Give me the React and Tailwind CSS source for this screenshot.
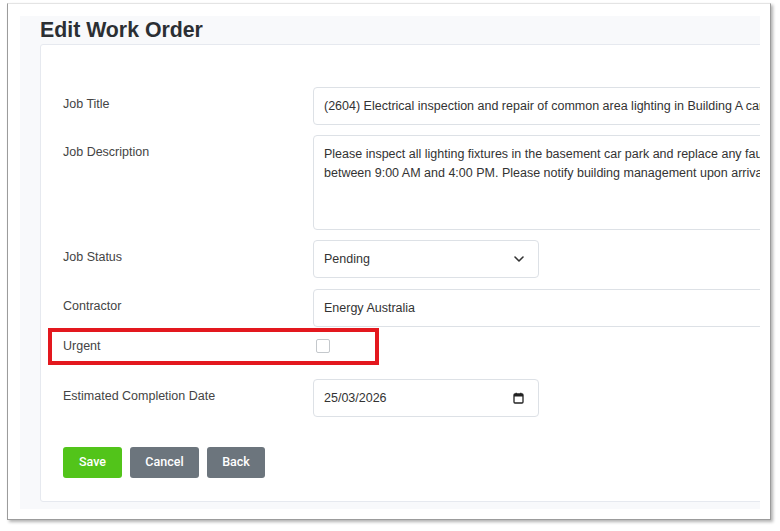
import React from 'react';

const labelCls = 'w-[250px] shrink-0 pt-[9px] text-[12.5px] leading-4 text-[#444]';
const inputCls = 'h-[38px] border border-[#dde1e6] rounded-[4px] bg-white px-[10px] flex items-center text-[12.5px] text-[#333] whitespace-nowrap';

function FormRow({ label, children, className = '' }) {
    return (
        <div className={`flex ${className}`}>
            <div className={labelCls}>{label}</div>
            {children}
        </div>
    );
}

function ChevronDown() {
    return (
        <svg width="10" height="6" viewBox="0 0 10 6" className="text-[#333]">
            <path d="M1 1l4 4 4-4" fill="none" stroke="currentColor" strokeWidth="1.6" strokeLinecap="round" strokeLinejoin="round" />
        </svg>
    );
}

function CalendarIcon() {
    return (
        <svg width="11" height="12" viewBox="0 0 11 12" className="text-[#222]">
            <rect x="1" y="2" width="9" height="9" rx="1" fill="none" stroke="currentColor" strokeWidth="1.3" />
            <rect x="1" y="2" width="9" height="2.5" fill="currentColor" />
            <path d="M3.2 0.8v2M7.8 0.8v2" stroke="currentColor" strokeWidth="1.2" />
        </svg>
    );
}

export default function App() {
    return (
        <div className="relative w-[780px] h-[531px] bg-white overflow-hidden" style={{ fontFamily: '"Liberation Sans", Arial, sans-serif' }}>
            {/* Screenshot frame */}
            <div className="ml-[7px] mt-[3px] w-[764px] h-[517px] border border-[#9c9c9c] border-t-[#e4e4e4] shadow-[2px_2px_3px_rgba(0,0,0,0.3)] bg-white pl-[12px] pt-[12px]">
                <div className="w-[740px] h-[493px] bg-[#f8f9fb] overflow-hidden pl-[20px] pt-[2px]">
                    <h1 className="h-[24px] leading-[24px] text-[21.3px] font-bold text-[#2b2f33]">Edit Work Order</h1>

                    {/* Card */}
                    <div className="mt-[2px] w-[900px] h-[458px] bg-white border border-[#e6e9ef] rounded-[3px] pl-[22px] pt-[42px]">
                        <FormRow label="Job Title" className="mb-[10px]">
                            <div className={`${inputCls} w-[600px]`}>
                                (2604) Electrical inspection and repair of common area lighting in Building A car park
                            </div>
                        </FormRow>

                        <FormRow label="Job Description" className="mb-[10px]">
                            <div className="w-[600px] h-[95px] border border-[#dde1e6] rounded-[4px] bg-white px-[10px] pt-[9px] text-[12.5px] leading-[19px] text-[#333] whitespace-nowrap">
                                <div>Please inspect all lighting fixtures in the basement car park and replace any faulty lights. Access is available</div>
                                <div>between 9:00 AM and 4:00 PM. Please notify building management upon arrival.</div>
                            </div>
                        </FormRow>

                        <FormRow label="Job Status" className="mb-[11px]">
                            <div className={`${inputCls} w-[226px] justify-between pr-[14px]`}>
                                <span>Pending</span>
                                <ChevronDown />
                            </div>
                        </FormRow>

                        <FormRow label="Contractor" className="mb-[10px]">
                            <div className={`${inputCls} w-[600px]`}>Energy Australia</div>
                        </FormRow>

                        <div className="flex h-[32px] mb-[10px]">
                            <div className="w-[250px] shrink-0 pt-[1px] text-[12.5px] leading-4 text-[#444]">Urgent</div>
                            <div className="mt-[2px] ml-[3px] w-[14px] h-[14px] border border-[#c4c8cc] rounded-[2px] bg-white"></div>
                        </div>

                        <FormRow label="Estimated Completion Date" className="mb-[30px]">
                            <div className={`${inputCls} w-[226px] justify-between pr-[14px]`}>
                                <span>25/03/2026</span>
                                <CalendarIcon />
                            </div>
                        </FormRow>

                        <div className="flex gap-[8px]" style={{ fontFamily: 'Roboto, "Liberation Sans", sans-serif' }}>
                            <button className="w-[59px] h-[31px] rounded-[3px] bg-[#52c41a] text-white text-[12.5px] font-medium">Save</button>
                            <button className="w-[69px] h-[31px] rounded-[3px] bg-[#6c757d] text-white text-[12.5px] font-medium">Cancel</button>
                            <button className="w-[58px] h-[31px] rounded-[3px] bg-[#6c757d] text-white text-[12.5px] font-medium">Back</button>
                        </div>
                    </div>
                </div>
            </div>

            {/* Annotation highlight */}
            <div className="absolute left-[48px] top-[328px] w-[331px] h-[37px] border-[4px] border-[#e3181e]"></div>
        </div>
    );
}
